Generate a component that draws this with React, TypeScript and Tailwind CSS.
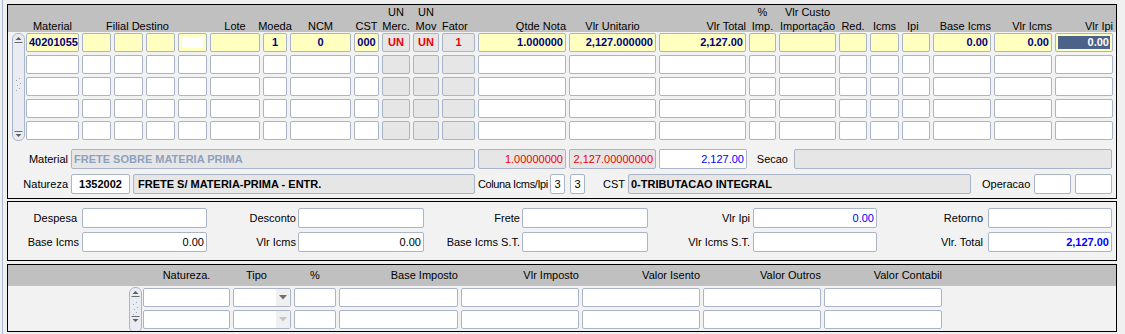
import type { ReactNode } from "react";
import clsx from "clsx";

type Kind = "y" | "w" | "g" | "s" | "p";
type Align = "l" | "c" | "r";
type Tone = "navy" | "red" | "blue" | "black" | "mute";

const bgOf: Record<Kind, string> = {
    y: "bg-[#ffffc0]",
    w: "bg-white",
    g: "bg-[#e6e6e6]",
    s: "bg-[#ffffc0]",
    p: "bg-[#ffffc0]",
};

const justifyOf: Record<Align, string> = {
    l: "justify-start",
    c: "justify-center",
    r: "justify-end",
};

const toneOf: Record<Tone, string> = {
    navy: "text-[#000080]",
    red: "text-[#ee0000]",
    blue: "text-[#0000ff]",
    black: "text-black",
    mute: "text-[#8da1bd]",
};

// 23 columns of the item block, gaps of 3px
const GRID =
    "grid grid-cols-[53px_29px_29px_29px_29px_50px_24px_61px_25px_28px_26px_33px_88px_87px_87px_27px_57px_28px_29px_28px_58px_58px_58px] gap-x-[3px]";

const TAX_GRID = "grid grid-cols-[87px_58px_42px_119px_118px_118px_118px_118px] gap-x-[3px]";

interface FieldProps {
    kind?: Kind;
    align?: Align;
    tone?: Tone;
    bold?: boolean;
    className?: string;
    children?: ReactNode;
}

function Field({ kind = "w", align = "l", tone = "navy", bold = true, className, children }: FieldProps) {
    return (
        <div
            className={clsx(
                "flex h-full items-center overflow-hidden whitespace-nowrap rounded-[2px] border border-[#a9b5c7] px-[2px] text-[11px] leading-none",
                bgOf[kind],
                justifyOf[align],
                toneOf[tone],
                bold && "font-bold",
                className,
            )}
        >
            {kind === "s" ? (
                <div className="flex h-[13px] w-full items-center justify-end bg-[#4b6289] px-[1px] text-white">
                    {children}
                </div>
            ) : kind === "p" ? (
                <div className="mx-[1px] h-[11px] w-full bg-white" />
            ) : (
                children
            )}
        </div>
    );
}

function Scroll({ h, grip, down }: { h: number; grip: number; down: number }) {
    return (
        <div className="w-[13px] shrink-0 overflow-hidden rounded-[6px] border border-[#aab6c8] bg-[#e9edf3]">
            <svg width="11" height={h} className="block">
                <path d="M2.5 6 L5.5 3 L8.5 6 Z" fill="#606060" />
                <line x1="1.5" x2="9.5" y1="8.5" y2="8.5" stroke="#6b6b6b" />
                <g fill="#9aa6b6">
                    <rect x="6" y={grip} width="1" height="1" />
                    <rect x="3" y={grip + 2} width="1" height="1" />
                    <rect x="7" y={grip + 5} width="1" height="1" />
                    <rect x="4" y={grip + 7} width="1" height="1" />
                    <rect x="6" y={grip + 10} width="1" height="1" />
                    <rect x="3" y={grip + 12} width="1" height="1" />
                </g>
                <line x1="1.5" x2="9.5" y1={down} y2={down} stroke="#6b6b6b" />
                <path d={`M2.5 ${down + 2.5} L5.5 ${down + 5.5} L8.5 ${down + 2.5} Z`} fill="#606060" />
            </svg>
        </div>
    );
}

function Head({ className, children }: { className?: string; children: ReactNode }) {
    return <div className={clsx("flex whitespace-nowrap", className)}>{children}</div>;
}

function Two({ a, b }: { a: string; b: string }) {
    return (
        <div className="flex flex-col items-center">
            <span>{a}</span>
            <span>{b}</span>
        </div>
    );
}

type CellSpec = [Kind, string?, Align?, Tone?];

const firstRow: CellSpec[] = [
    ["y", "40201055"],
    ["y"],
    ["y"],
    ["y"],
    ["p"],
    ["y"],
    ["y", "1", "c"],
    ["y", "0", "c"],
    ["y", "000", "c"],
    ["g", "UN", "c", "red"],
    ["g", "UN", "c", "red"],
    ["g", "1", "c", "red"],
    ["y", "1.000000", "r"],
    ["y", "2,127.000000", "r"],
    ["y", "2,127.00", "r"],
    ["y"],
    ["y"],
    ["y"],
    ["y"],
    ["y"],
    ["y", "0.00", "r"],
    ["y", "0.00", "r"],
    ["s", "0.00", "r"],
];

const blankRow: CellSpec[] = firstRow.map((_, i) => [i >= 9 && i <= 11 ? "g" : "w"]);

function Label({ className, children }: { className?: string; children: ReactNode }) {
    return (
        <div className={clsx("flex shrink-0 items-center justify-end whitespace-nowrap text-[11px] text-black", className)}>
            {children}
        </div>
    );
}

function ItemsPanel() {
    const rows = [firstRow, blankRow, blankRow, blankRow, blankRow];
    return (
        <div className="h-[195px] w-[1110px] border border-black bg-[#f2f2f2]">
            <div className="h-[27px] bg-[#c0c0c0] pl-[18px]">
                <div className={clsx(GRID, "h-full items-end pb-[1px] text-[11px] leading-[14px] text-black")}>
                    <Head className="justify-center">Material</Head>
                    <Head className="col-span-4 pl-[24px]">Filial Destino</Head>
                    <Head className="justify-center">Lote</Head>
                    <Head className="justify-center">Moeda</Head>
                    <Head className="justify-center">NCM</Head>
                    <Head className="justify-center">CST</Head>
                    <Head className="justify-center">
                        <Two a="UN" b="Merc." />
                    </Head>
                    <Head className="justify-center">
                        <Two a="UN" b="Mov" />
                    </Head>
                    <Head>Fator</Head>
                    <Head className="justify-end">Qtde Nota</Head>
                    <Head className="justify-center">Vlr Unitario</Head>
                    <Head className="justify-end">Vlr Total</Head>
                    <Head className="justify-center">
                        <Two a="%" b="Imp." />
                    </Head>
                    <Head className="justify-center">
                        <Two a="Vlr Custo" b="Importação" />
                    </Head>
                    <Head className="justify-center">Red.</Head>
                    <Head className="justify-center">Icms</Head>
                    <Head className="pl-[5px]">Ipi</Head>
                    <Head className="justify-end">Base Icms</Head>
                    <Head className="justify-end">Vlr Icms</Head>
                    <Head className="justify-end">Vlr Ipi</Head>
                </div>
            </div>

            <div className="mt-[1px] flex pl-[4px]">
                <Scroll h={106} grip={44} down={97.5} />
                <div className="ml-[1px] flex flex-col gap-[3px]">
                    {rows.map((row, r) => (
                        <div key={r} className={clsx(GRID, "h-[19px]")}>
                            {row.map(([kind, text, align, tone], c) => (
                                <Field key={c} kind={kind} align={align ?? "l"} tone={tone ?? "navy"}>
                                    {text}
                                </Field>
                            ))}
                        </div>
                    ))}
                </div>
            </div>

            <div className="mt-[8px] flex h-[20px]">
                <Label className="w-[63px] pr-[3px]">Material</Label>
                <Field kind="g" tone="mute" className="w-[404px]">
                    FRETE SOBRE MATERIA PRIMA
                </Field>
                <Field kind="g" tone="red" bold={false} align="r" className="ml-[3px] w-[88px]">
                    1.00000000
                </Field>
                <Field kind="g" tone="red" bold={false} align="r" className="ml-[3px] w-[87px]">
                    2,127.00000000
                </Field>
                <Field tone="blue" bold={false} align="r" className="ml-[3px] w-[88px]">
                    2,127.00
                </Field>
                <Label className="w-[47px] pr-[6px]">Secao</Label>
                <Field kind="g" className="w-[318px]" />
            </div>

            <div className="mt-[5px] flex h-[20px]">
                <Label className="w-[63px] pr-[3px]">Natureza</Label>
                <Field tone="black" align="c" className="w-[59px]">
                    1352002
                </Field>
                <Field kind="g" tone="black" className="ml-[3px] w-[342px] pl-[4px]">
                    FRETE S/ MATERIA-PRIMA - ENTR.
                </Field>
                <Label className="ml-[3px] w-[70px] justify-start tracking-[-0.4px]">Coluna Icms/Ipi</Label>
                <Field tone="black" bold={false} align="c" className="ml-[2px] w-[15px] text-[10px]">
                    3
                </Field>
                <Field tone="black" bold={false} align="c" className="ml-[5px] w-[15px] text-[10px]">
                    3
                </Field>
                <Label className="ml-[18px] w-[20px] justify-start">CST</Label>
                <Field kind="g" tone="black" className="ml-[5px] w-[343px]">
                    0-TRIBUTACAO INTEGRAL
                </Field>
                <Label className="ml-[11px] w-[48px] justify-start">Operacao</Label>
                <Field className="ml-[4px] w-[37px]" />
                <Field className="ml-[4px] w-[37px]" />
            </div>
        </div>
    );
}

function TotalsPanel() {
    return (
        <div className="mt-[2px] flex h-[60px] w-[1110px] flex-col gap-[4px] border border-black bg-[#f2f2f2] pt-[6px]">
            <div className="flex h-[20px]">
                <Label className="w-[74px] pr-[5px]">Despesa</Label>
                <Field className="w-[125px]" />
                <Label className="w-[91px] pr-[2px]">Desconto</Label>
                <Field className="w-[126px]" />
                <Label className="w-[98px] pr-[2px]">Frete</Label>
                <Field className="w-[126px]" />
                <Label className="w-[105px] pr-[3px]">Vlr Ipi</Label>
                <Field tone="blue" bold={false} align="r" className="w-[124px]">
                    0.00
                </Field>
                <Label className="w-[111px] pr-[5px]">Retorno</Label>
                <Field className="w-[124px]" />
            </div>
            <div className="flex h-[20px]">
                <Label className="w-[74px] pr-[3px]">Base Icms</Label>
                <Field tone="black" bold={false} align="r" className="w-[125px]">
                    0.00
                </Field>
                <Label className="w-[91px] pr-[2px]">Vlr Icms</Label>
                <Field tone="black" bold={false} align="r" className="w-[126px]">
                    0.00
                </Field>
                <Label className="w-[98px] pr-[2px]">Base Icms S.T.</Label>
                <Field className="w-[126px]" />
                <Label className="w-[105px] pr-[3px]">Vlr Icms S.T.</Label>
                <Field className="w-[124px]" />
                <Label className="w-[111px] pr-[5px]">Vlr. Total</Label>
                <Field tone="blue" align="r" className="w-[124px]">
                    2,127.00
                </Field>
            </div>
        </div>
    );
}

function TaxRow({ dim }: { dim?: boolean }) {
    return (
        <div className={clsx(TAX_GRID, "h-[19px]")}>
            <Field />
            <div className="flex h-full overflow-hidden rounded-[2px] border border-[#a9b5c7] bg-white">
                <div className="flex-1" />
                <div className="flex w-[14px] items-center justify-center bg-[#f0f0f0]">
                    <svg width="8" height="5">
                        <path d="M0 0 H8 L4 4.5 Z" fill={dim ? "#c4c4c4" : "#707070"} />
                    </svg>
                </div>
            </div>
            <Field />
            <Field />
            <Field />
            <Field />
            <Field />
            <Field />
        </div>
    );
}

function TaxPanel() {
    return (
        <div className="mt-[3px] h-[68px] w-[1110px] overflow-hidden border border-black bg-[#f2f2f2]">
            <div className="h-[21px] bg-[#c0c0c0] pl-[135px]">
                <div className={clsx(TAX_GRID, "h-full items-center text-[11px] text-black")}>
                    <Head className="justify-center">Natureza.</Head>
                    <Head className="pl-[13px]">Tipo</Head>
                    <Head className="justify-center">%</Head>
                    <Head className="justify-end">Base Imposto</Head>
                    <Head className="justify-end">Vlr Imposto</Head>
                    <Head className="justify-end">Valor Isento</Head>
                    <Head className="justify-end">Valor Outros</Head>
                    <Head className="justify-end">Valor Contabil</Head>
                </div>
            </div>
            <div className="flex pl-[121px] pt-[1px]">
                <Scroll h={44} grip={14} down={28.5} />
                <div className="ml-[1px] flex flex-col gap-[3px] pt-[1px]">
                    <TaxRow />
                    <TaxRow dim />
                </div>
            </div>
        </div>
    );
}

export default function App() {
    return (
        <div className="flex h-[334px] w-[1125px] overflow-hidden bg-[#f0f0f0] font-['Liberation_Sans',Arial,sans-serif]">
            <div className="ml-[2px] h-full w-[1px] bg-[#a6bad6]" />
            <div className="ml-[4px] pt-[4px]">
                <ItemsPanel />
                <TotalsPanel />
                <TaxPanel />
            </div>
        </div>
    );
}
